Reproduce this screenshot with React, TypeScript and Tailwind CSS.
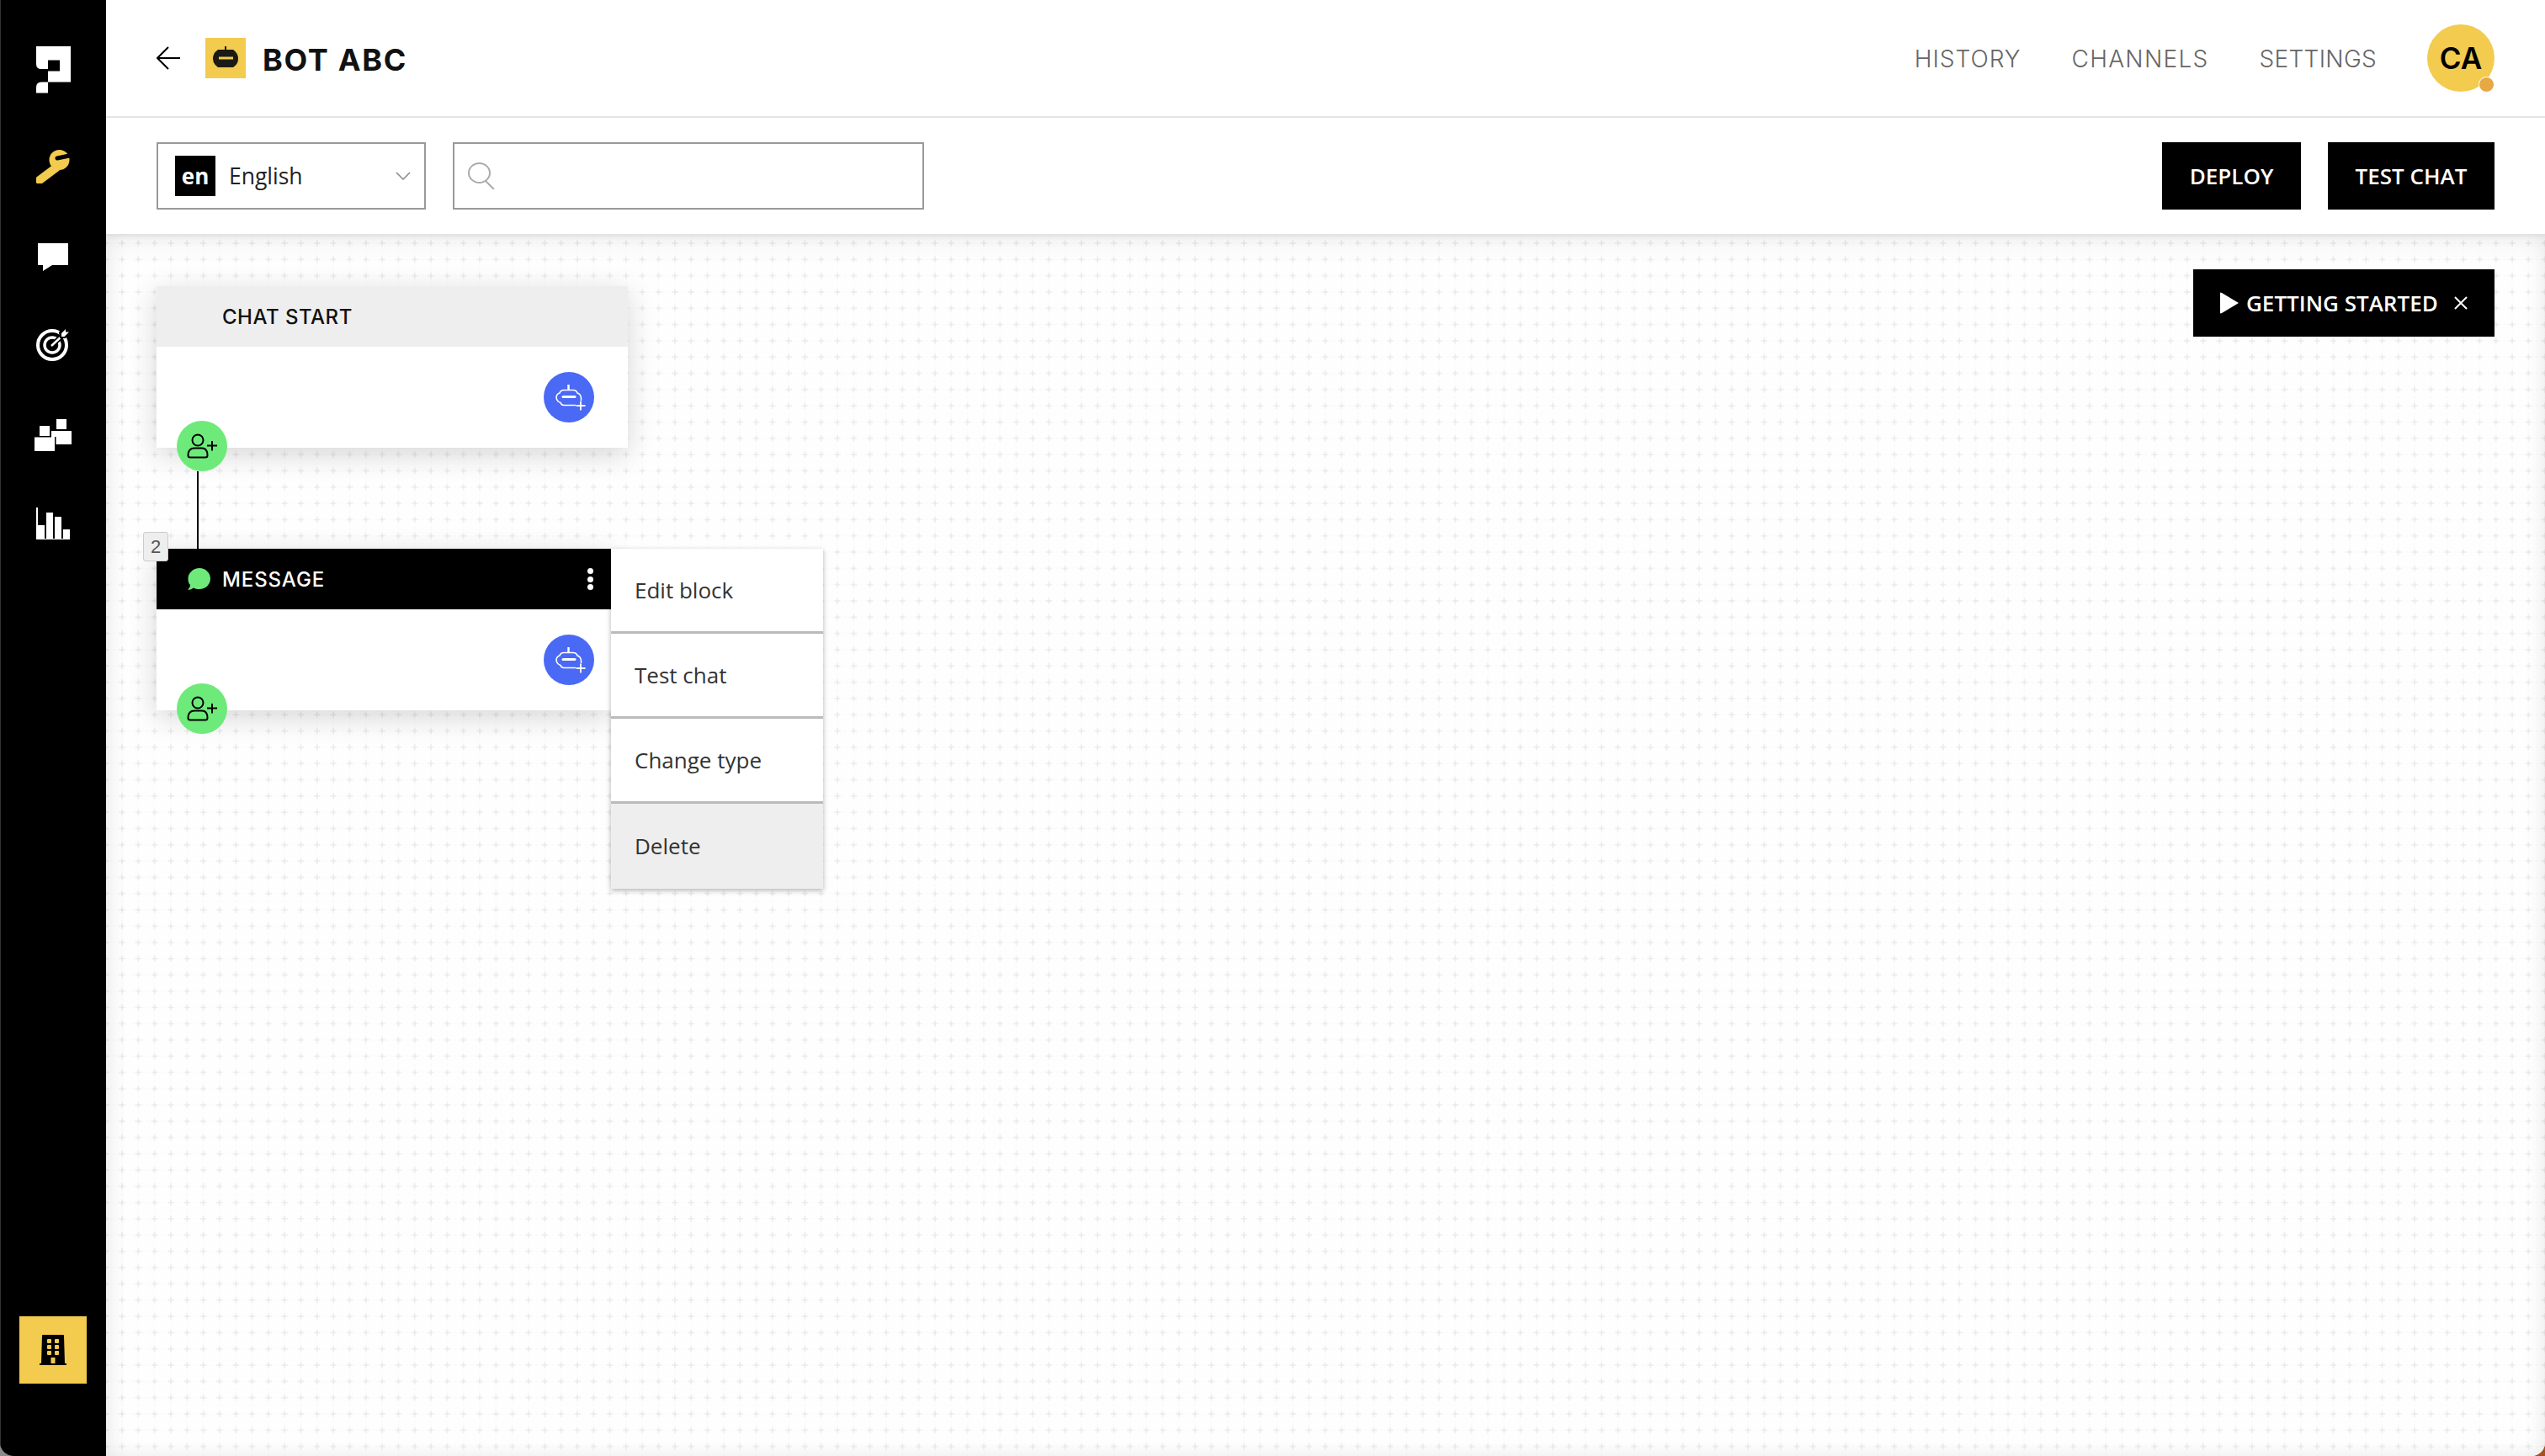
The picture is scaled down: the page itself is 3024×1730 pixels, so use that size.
import { Fragment } from "react";

const YELLOW = "#f2cb4f";

function Logo() {
  return (
    <svg width="41" height="56" viewBox="42 55 41 56" className="mt-[55px]" fill="#fff">
      <path d="M42 55H83V97.5H56V84.5H70V71.5H56V82H48Q42 82 42 76Z" />
      <path d="M56 97.5V110.5H42V104Q42 97.5 48 97.5Z" />
    </svg>
  );
}

function WrenchIcon() {
  return (
    <svg width="40" height="40" viewBox="0 0 40 40" className="mt-[67px]" fill="none">
      <path d="M4 36L24 21" stroke={YELLOW} strokeWidth="10" strokeLinecap="round" />
      <circle cx="27.5" cy="12" r="12" fill={YELLOW} />
      <path d="M25 10L44 6" stroke="#000" strokeWidth="5" strokeLinecap="round" />
    </svg>
  );
}

function ChatIcon() {
  return (
    <svg width="36" height="33" viewBox="0 0 36 33" className="mt-[71px]" fill="#fff">
      <path d="M0 0H36V26H17L6 33V26H0Z" />
    </svg>
  );
}

function TargetIcon() {
  return (
    <svg width="40" height="40" viewBox="0 0 40 40" className="mt-[67px]" fill="none">
      <circle cx="19" cy="21" r="17" stroke="#fff" strokeWidth="4" />
      <circle cx="19" cy="21" r="9" stroke="#fff" strokeWidth="3.5" />
      <path d="M19 21L33 8" stroke="#000" strokeWidth="6" />
      <path d="M18 22L33 8" stroke="#fff" strokeWidth="2.5" />
      <path d="M28 6L35 0L35 5L40 5L34 12L29 12Z" fill="#000" stroke="#000" strokeWidth="2" />
      <path d="M30 7L35 2L35 5.5L39 5.5L33.5 11L30 11Z" fill="#fff" />
    </svg>
  );
}

function BlocksIcon() {
  return (
    <svg width="44" height="38" viewBox="41 498 44 38" className="mt-[69px]" fill="#fff">
      <rect x="67" y="498" width="12" height="12" />
      <rect x="61" y="512" width="24" height="16" />
      <rect x="47" y="506" width="12" height="12" />
      <rect x="41" y="519.5" width="24" height="16.5" />
      <rect x="65" y="519" width="1.5" height="17" fill="#000" />
    </svg>
  );
}

function BarsIcon() {
  return (
    <svg width="40" height="38" viewBox="43 604 40 38" className="mt-[67px]" fill="#fff">
      <rect x="43" y="604" width="2" height="22" />
      <rect x="43" y="625" width="10" height="17" />
      <rect x="55" y="610" width="8" height="32" />
      <rect x="65" y="615" width="8" height="27" />
      <rect x="75" y="630" width="8" height="12" />
      <rect x="43" y="641" width="40" height="1" />
    </svg>
  );
}

function BuildingIcon() {
  return (
    <svg width="32" height="36" viewBox="0 0 32 36" fill="#000">
      <path d="M3 1Q3 0 4 0H28Q29 0 29 1L30 34H2Z" />
      <rect x="0" y="34" width="32" height="2" />
      <g fill={YELLOW}>
        <rect x="9" y="5" width="5" height="5" rx="1" />
        <rect x="18" y="5" width="5" height="5" rx="1" />
        <rect x="9" y="12" width="5" height="5" rx="1" />
        <rect x="18" y="12" width="5" height="5" rx="1" />
        <rect x="9" y="19" width="5" height="5" rx="1" />
        <rect x="18" y="19" width="5" height="5" rx="1" />
        <rect x="13.5" y="27" width="5" height="7" />
      </g>
    </svg>
  );
}

function BotPlusIcon() {
  return (
    <svg width="60" height="60" viewBox="0 0 60 60" fill="none" stroke="#fff">
      <path d="M29.5 15V21" strokeWidth="2.5" />
      <path
        d="M38 39.5H24Q21 39.5 20 36.5Q15.5 35 15 30Q15.5 26 19 25Q20 21.5 24 21.5H35Q39 21.5 40 25Q44 26 44.5 31V34"
        strokeWidth="1.6"
      />
      <path d="M23 29.5H37" strokeWidth="3" strokeLinecap="round" />
      <path d="M38.5 40H49.5M44 34.5V45.5" strokeWidth="1.8" />
    </svg>
  );
}

function UserPlusIcon() {
  return (
    <svg width="60" height="60" viewBox="0 0 60 60" fill="none" stroke="#000" strokeWidth="2">
      <circle cx="25" cy="23" r="6.5" />
      <path d="M13.5 41Q13.5 32.5 21 32.5H30Q36.5 32.5 36.5 41Q36.5 43.5 34 43.5H16Q13.5 43.5 13.5 41Z" />
      <path d="M36 29.5H48M42 24V35.5" />
    </svg>
  );
}

function Sidebar() {
  return (
    <aside className="w-[126px] shrink-0 bg-black shadow-[inset_1px_0_0_#333] flex flex-col items-center z-20">
      <Logo />
      <WrenchIcon />
      <ChatIcon />
      <TargetIcon />
      <BlocksIcon />
      <BarsIcon />
      <div className="mt-auto mb-[86px] w-20 h-20 bg-[#f2cb4f] flex items-center justify-center">
        <BuildingIcon />
      </div>
    </aside>
  );
}

function Header() {
  return (
    <header className="h-[140px] shrink-0 bg-white border-b-2 border-b-[#e8e8e8] flex items-center pl-[60px] pr-[60px]">
      <svg width="28" height="28" viewBox="0 0 28 28" fill="none" stroke="#000" strokeWidth="2">
        <path d="M14 1L1 14L14 27M1 14H28" />
      </svg>
      <div className="ml-[30px] w-12 h-12 bg-[#f2cb4f]">
        <svg width="48" height="48" viewBox="0 0 48 48">
          <path d="M23 10H25V14H33Q39 18 39 25Q39 31 33 35H15Q9 31 9 25Q9 18 15 14H23Z" fill="#1c1a14" />
          <rect x="16" y="22.5" width="17" height="3" fill={YELLOW} />
        </svg>
      </div>
      <h1 className="ml-5 pt-[3px] font-['Inter',sans-serif] font-bold text-[36px] tracking-[1.7px] text-[#111]">BOT ABC</h1>
      <nav className="ml-auto pt-[2px] flex items-center gap-[60px] font-['Inter',sans-serif] font-light text-[28px] text-[#666]">
        <span className="tracking-[1px]">HISTORY</span>
        <span className="tracking-[1.3px]">CHANNELS</span>
        <span className="tracking-[0.3px]">SETTINGS</span>
      </nav>
      <div className="relative ml-[60px] w-20 h-20 rounded-full bg-[#f2cb4f] flex items-center justify-center font-['Inter',sans-serif] font-semibold text-[35px] text-black">
        CA
        <span className="absolute right-0 bottom-[-1px] w-[19px] h-[19px] rounded-full bg-[#e8a945] border border-white" />
      </div>
    </header>
  );
}

function Toolbar() {
  return (
    <div className="h-[138px] shrink-0 bg-white flex items-center pl-[60px] pr-[60px] shadow-[0_2px_6px_rgba(0,0,0,0.08)] z-10">
      <div className="w-[320px] h-20 border-2 border-[#999] flex items-center pl-5 pr-4">
        <span className="w-12 h-12 bg-black text-white font-bold text-[26px] flex items-center justify-center">en</span>
        <span className="ml-4 pt-[2px] text-[26.5px] text-[#222]">English</span>
        <svg className="ml-auto" width="18" height="10" viewBox="0 0 18 10" fill="none" stroke="#888" strokeWidth="1.5">
          <path d="M1 1L9 9L17 1" />
        </svg>
      </div>
      <div className="ml-8 w-[560px] h-20 border-2 border-[#999] flex items-center pl-4">
        <svg width="32" height="32" viewBox="0 0 32 32" fill="none" stroke="#aaa" strokeWidth="2">
          <ellipse cx="13.5" cy="12.5" rx="12.5" ry="11.5" />
          <path d="M21 22L31 32" />
        </svg>
      </div>
      <button className="ml-auto w-[165px] h-20 bg-black text-white text-[26px] font-semibold">DEPLOY</button>
      <button className="ml-8 w-[198px] h-20 bg-black text-white text-[26px] font-semibold">TEST CHAT</button>
    </div>
  );
}

const menuItems = ["Edit block", "Test chat", "Change type"];

function BlockMenu() {
  return (
    <div className="absolute left-[600px] top-[374px] w-[252px] bg-white shadow-[0_2px_6px_rgba(0,0,0,0.3)] text-[26px] text-[#333]">
      {menuItems.map((item) => (
        <Fragment key={item}>
          <div className="h-[101px] flex items-center pl-7 border-b-[3px] border-b-[#bbb]">{item}</div>
        </Fragment>
      ))}
      <div className="h-[101px] flex items-center pl-7 bg-[#eee]">Delete</div>
    </div>
  );
}

function Canvas() {
  return (
    <main className="relative flex-1 bg-[#fefefe] overflow-hidden">
      <svg className="absolute inset-0 w-full h-full">
        <defs>
          <pattern id="grid" x="9.3" y="1.3" width="19.32" height="19.32" patternUnits="userSpaceOnUse">
            <path d="M9.66 0V19.32M0 9.66H19.32" stroke="#f6f6f6" strokeWidth="1" strokeDasharray="1 2" />
            <path d="M9.66 6V13.3M6 9.66H13.3" stroke="#e2e2e2" strokeWidth="1" />
          </pattern>
        </defs>
        <rect width="100%" height="100%" fill="url(#grid)" />
      </svg>
      <div className="absolute inset-0 shadow-[inset_0_12px_30px_rgba(0,0,0,0.05),inset_8px_0_24px_rgba(0,0,0,0.03),inset_-4px_-4px_20px_rgba(0,0,0,0.03)]" />

      <div className="absolute right-[60px] top-[42px] w-[358px] h-20 bg-black text-white text-[26px] font-semibold flex items-center pl-[31px]">
        <svg width="24" height="26" viewBox="0 0 24 26" fill="#fff">
          <path d="M1 1.5Q1 0 3 1L23 13L3 25Q1 26 1 24.5Z" />
        </svg>
        <span className="ml-2">GETTING STARTED</span>
        <svg className="ml-[19px]" width="16" height="16" viewBox="0 0 16 16" fill="none" stroke="#fff" strokeWidth="2">
          <path d="M1 1L15 15M15 1L1 15" />
        </svg>
      </div>

      {/* bloque inicial */}
      <div className="absolute left-[60px] top-[62px] w-[560px] h-[192px] bg-white shadow-[0_8px_32px_rgba(0,0,0,0.16)]">
        <div className="h-[72px] bg-[#eee] flex items-center pl-[78px] pt-[2px] font-['Inter',sans-serif] font-medium text-[24px] tracking-[0.5px] text-[#111]">
          CHAT START
        </div>
        <div className="absolute left-[460px] top-[102px] w-[60px] h-[60px] rounded-full bg-[#4a69f5]">
          <BotPlusIcon />
        </div>
      </div>

      <div className="absolute left-[108px] top-[282px] w-[2px] h-[92px] bg-black" />

      {/* bloque mensaje */}
      <div className="absolute left-[60px] top-[374px] w-[540px] h-[192px] bg-white shadow-[0_8px_32px_rgba(0,0,0,0.16)]">
        <div className="h-[72px] bg-black flex items-center pl-[37px] font-['Inter',sans-serif] font-medium text-[24px] tracking-[0.9px] text-white">
          <svg width="27" height="26" viewBox="0 0 27 26" fill="#6eea7a">
            <path d="M14 0C21 0 27 5.5 27 12.5S21 25 14 25C11 25 9 24.5 7 23.5C5 25 3 26 0 25.5C2 24 3 22 3 20C1 18 0.5 15.5 0.5 12.5C0.5 5.5 7 0 14 0Z" />
          </svg>
          <span className="ml-[14px] pt-[2px]">MESSAGE</span>
          <span className="ml-auto mr-[21px] flex flex-col gap-[2.5px]">
            <i className="block w-[7px] h-[7px] rounded-full bg-white" />
            <i className="block w-[7px] h-[7px] rounded-full bg-white" />
            <i className="block w-[7px] h-[7px] rounded-full bg-white" />
          </span>
        </div>
        <div className="absolute left-[460px] top-[102px] w-[60px] h-[60px] rounded-full bg-[#4a69f5]">
          <BotPlusIcon />
        </div>
      </div>

      <div className="absolute left-[44px] top-[354px] w-[30px] h-[35px] bg-[#eee] border border-[#ccc] rounded-[3px] flex items-center justify-center font-['Liberation_Sans',sans-serif] text-[22px] text-[#555]">
        2
      </div>

      <BlockMenu />

      <div className="absolute left-[84px] top-[222px] w-[60px] h-[60px] rounded-full bg-[#6eea7a]">
        <UserPlusIcon />
      </div>
      <div className="absolute left-[84px] top-[534px] w-[60px] h-[60px] rounded-full bg-[#6eea7a]">
        <UserPlusIcon />
      </div>
    </main>
  );
}

export default function App() {
  return (
    <div className="w-[3024px] h-[1730px] bg-[linear-gradient(to_right,#8a8a8a_50%,#a5521f_50%)] font-['Open_Sans',sans-serif]">
      <div className="w-full h-full flex rounded-b-[16px] overflow-hidden bg-white">
        <Sidebar />
        <div className="flex-1 flex flex-col min-w-0">
          <Header />
          <Toolbar />
          <Canvas />
        </div>
      </div>
    </div>
  );
}
